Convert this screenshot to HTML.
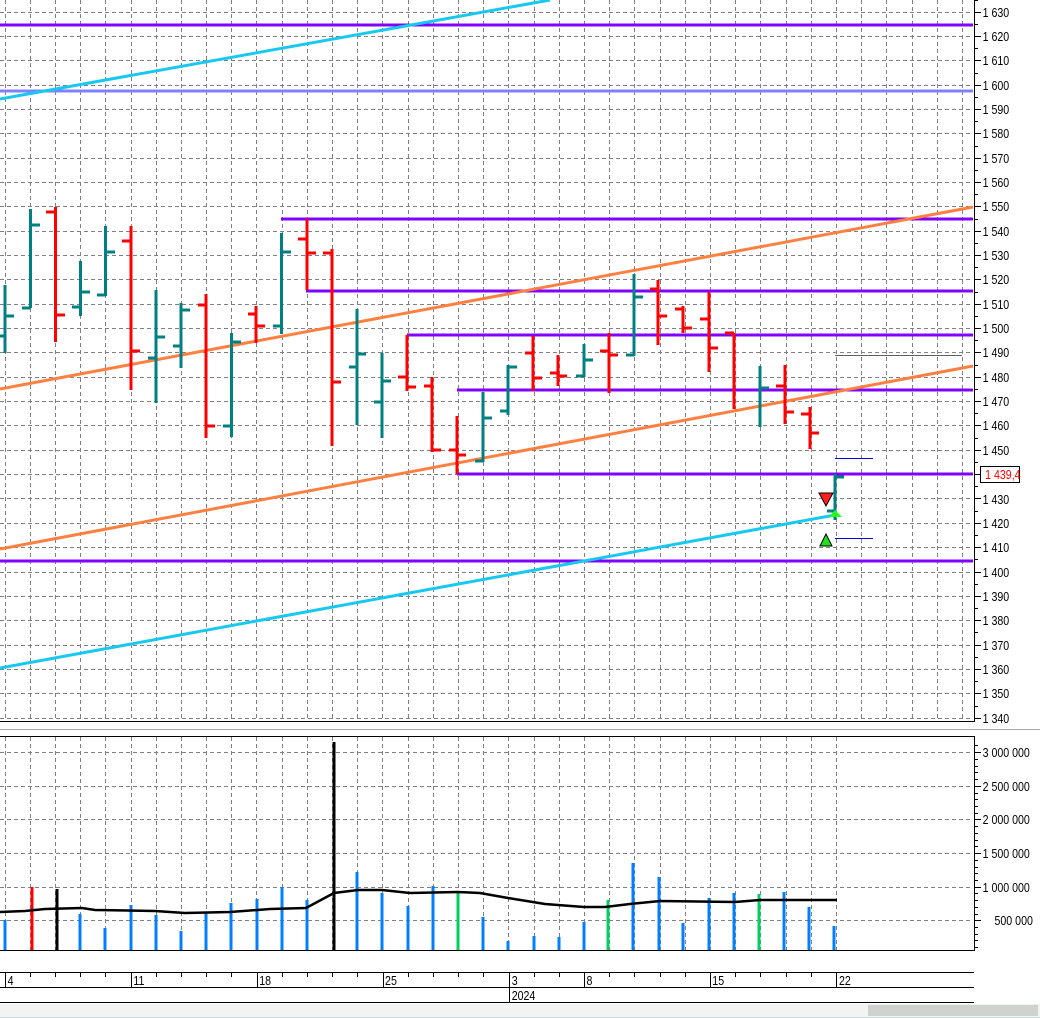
<!DOCTYPE html>
<html><head><meta charset="utf-8"><style>
html,body{margin:0;padding:0;background:#fff;width:1040px;height:1018px;overflow:hidden}
svg{display:block}
text{font-family:"Liberation Sans",sans-serif;font-size:12.5px;fill:#000}
</style></head><body>
<svg width="1040" height="1018" viewBox="0 0 1040 1018" xmlns="http://www.w3.org/2000/svg">
<rect width="1040" height="1018" fill="#fff"/>
<g stroke="#808080" stroke-width="1" stroke-dasharray="4,3" fill="none" shape-rendering="crispEdges">
<path d="M0 12.5H973M0 36.5H973M0 60.5H973M0 85.5H973M0 109.5H973M0 133.5H973M0 158.5H973M0 182.5H973M0 206.5H973M0 231.5H973M0 255.5H973M0 279.5H973M0 304.5H973M0 328.5H973M0 352.5H973M0 377.5H973M0 401.5H973M0 425.5H973M0 450.5H973M0 474.5H973M0 498.5H973M0 523.5H973M0 547.5H973M0 572.5H973M0 596.5H973M0 620.5H973M0 645.5H973M0 669.5H973M0 693.5H973M0 718.5H973"/>
<path d="M5.5 0V719M30.5 0V719M55.5 0V719M80.5 0V719M105.5 0V719M131.5 0V719M156.5 0V719M181.5 0V719M206.5 0V719M231.5 0V719M256.5 0V719M282.5 0V719M307.5 0V719M332.5 0V719M357.5 0V719M382.5 0V719M408.5 0V719M433.5 0V719M458.5 0V719M483.5 0V719M508.5 0V719M534.5 0V719M559.5 0V719M584.5 0V719M609.5 0V719M634.5 0V719M660.5 0V719M685.5 0V719M710.5 0V719M735.5 0V719M760.5 0V719M786.5 0V719M811.5 0V719M836.5 0V719M861.5 0V719M886.5 0V719M912.5 0V719M937.5 0V719M962.5 0V719"/>
<path d="M0 752.5H973M0 786.5H973M0 819.5H973M0 853.5H973M0 887.5H973M0 920.5H973"/>
<path d="M5.5 737V950M30.5 737V950M55.5 737V950M80.5 737V950M105.5 737V950M131.5 737V950M156.5 737V950M181.5 737V950M206.5 737V950M231.5 737V950M256.5 737V950M282.5 737V950M307.5 737V950M332.5 737V950M357.5 737V950M382.5 737V950M408.5 737V950M433.5 737V950M458.5 737V950M483.5 737V950M508.5 737V950M534.5 737V950M559.5 737V950M584.5 737V950M609.5 737V950M634.5 737V950M660.5 737V950M685.5 737V950M710.5 737V950M735.5 737V950M760.5 737V950M786.5 737V950M811.5 737V950M836.5 737V950"/>
</g>
<g stroke-width="3" fill="none">
<path d="M0 25H973" stroke="#8000ff"/>
<path d="M0 91H973" stroke="#8080ff"/>
<path d="M0 561H973" stroke="#8000ff"/>
<path d="M281 219H973M306 291H973M407 335H973M457 390H973M457 474H973" stroke="#8000ff"/>
</g>
<path d="M835 355.5H962" stroke="#606060" stroke-width="1"/>
<path d="M835 458.5H873M835 538.5H873" stroke="#0000e0" stroke-width="1"/>
<g stroke-width="3" fill="none">
<path d="M0 99L550 0" stroke="#18c8f0"/>
<path d="M0 668L835 515" stroke="#18c8f0"/>
<path d="M0 389L973 207" stroke="#ff8040"/>
<path d="M0 549L973 366" stroke="#ff8040"/>
</g>
<g stroke="#008080" stroke-width="3" fill="none">
<path d="M5 285V353M0 336H5M5 316H14"/>
<path d="M30.5 209V308M22 308H30.5M30.5 225H40"/>
<path d="M80.5 261V316M72 307H80.5M80.5 292H90"/>
<path d="M105.5 226V296M97 295H105.5M105.5 252H115"/>
<path d="M156 290V403M148 358H156M156 337H165"/>
<path d="M181 303V368M173 346H181M181 310H190"/>
<path d="M231.5 333V437M223 426H231.5M231.5 342H241"/>
<path d="M281.5 233V334M273 326H281.5M281.5 252H291"/>
<path d="M357 309V425M349 367H357M357 354H366"/>
<path d="M382 353V438M374 402H382M382 381H391"/>
<path d="M483 392V462M475 461H483M483 418H492"/>
<path d="M508 365V415M500 411H508M508 367H517"/>
<path d="M584 344V377M576 376H584M584 360H593"/>
<path d="M634 274V356M626 355H634M634 297H643"/>
<path d="M760 366V427M760 388H769"/>
<path d="M835 474V520M827 511H835M835 477H844"/>
</g>
<g stroke="#ff0000" stroke-width="3" fill="none">
<path d="M55.5 207V342M46 212H55.5M55.5 315H65"/>
<path d="M131 226V390M122 241H131M131 351H140"/>
<path d="M206 294V438M198 305H206M206 426H215"/>
<path d="M256 306V343M248 314H256M256 326H265"/>
<path d="M307 219V290M298 239H307M307 253H316"/>
<path d="M332 249V446M323 253H332M332 382H341"/>
<path d="M407 335V391M398 377H407M407 387H416"/>
<path d="M432 377V452M424 386H432M432 450H441"/>
<path d="M457 416V474M449 450H457M457 455H466"/>
<path d="M533 336V391M525 353H533M533 378H542"/>
<path d="M558 355V386M550 373H558M558 376H567"/>
<path d="M609 333V393M600 351H609M609 355H618"/>
<path d="M658 280V345M650 289H658M658 316H667"/>
<path d="M683 306V333M675 309H683M683 328H692"/>
<path d="M709 292V372M700 319H709M709 348H718"/>
<path d="M734 333V409M725 333H734"/>
<path d="M785 365V424M776 386H785M785 412H794"/>
<path d="M810 407V449M801 414H810M810 433H819"/>
</g>
<path d="M819 493H833L826 506Z" fill="#ff2020" stroke="#000" stroke-width="1"/>
<path d="M820 546H832L826 534Z" fill="#20e020" stroke="#000" stroke-width="1"/>
<path d="M829 517H842L835 510Z" fill="#20ff20"/>
<g stroke-width="3" fill="none">
<path stroke="#0080ff" d="M5 920V950M80 914V950M105 928V950M131 905V950M156 915V950M181 931V950M206 913V950M231 903V950M257 899V950M282 887V950M307 900V950M357 872V950M382 893V950M408 906V950M433 886V950M483 917V950M508 941V950M534 936V950M559 937V950M584 922V950M633 863V950M659 877V950M683 923V950M709 898V950M734 893V950M784 892V950M809 907V950M834 926V950"/>
<path stroke="#ff0000" d="M32 887V950"/>
<path stroke="#000" d="M57 889V950M334 742V950"/>
<path stroke="#00d060" d="M458 893V950M608 900V950M759 894V950"/>
</g>
<path d="M0 912L25 911L45 909L82 908L95 910L155 911L185 913L230 912L270 909L306 908L334 893L358 890L382 890L410 893L458 892L480 893L508 898L545 904L584 907L605 907L630 904L650 902L660 901L735 902L760 900L837 900" stroke="#000" stroke-width="2.5" fill="none"/>
<g stroke-width="1" fill="none" shape-rendering="crispEdges">
<path d="M0 721.5H974" stroke="#000"/>
<path d="M0 729.5H1040" stroke="#a8a8a8"/>
<path d="M0 736.5H974" stroke="#000"/>
<path d="M0 950.5H974" stroke="#000"/>
<path d="M974.5 0V722M974.5 736V951" stroke="#000"/>
<path d="M0 972.5H974M0 987.5H974M0 1002.5H974" stroke="#000"/>
<path d="M5.5 973V987M131.5 973V987M257.5 973V987M383.5 973V987M509.5 973V1002M584.5 973V987M710.5 973V987M836.5 973V987" stroke="#000"/>
<path d="M30.5 973V977M55.5 973V977M80.5 973V977M105.5 973V977M156.5 973V977M181.5 973V977M206.5 973V977M231.5 973V977M282.5 973V977M307.5 973V977M332.5 973V977M357.5 973V977M408.5 973V977M433.5 973V977M458.5 973V977M483.5 973V977M534.5 973V977M559.5 973V977M609.5 973V977M634.5 973V977M660.5 973V977M685.5 973V977M735.5 973V977M760.5 973V977M786.5 973V977M811.5 973V977" stroke="#000"/>
<path d="M974 12.5H981M974 36.5H981M974 60.5H981M974 85.5H981M974 109.5H981M974 133.5H981M974 158.5H981M974 182.5H981M974 206.5H981M974 231.5H981M974 255.5H981M974 279.5H981M974 304.5H981M974 328.5H981M974 352.5H981M974 377.5H981M974 401.5H981M974 425.5H981M974 450.5H981M974 474.5H981M974 498.5H981M974 523.5H981M974 547.5H981M974 572.5H981M974 596.5H981M974 620.5H981M974 645.5H981M974 669.5H981M974 693.5H981M974 718.5H981" stroke="#000"/>
<path d="M974 0.5H978M974 24.5H978M974 48.5H978M974 73.5H978M974 97.5H978M974 121.5H978M974 146.5H978M974 170.5H978M974 194.5H978M974 219.5H978M974 243.5H978M974 267.5H978M974 292.5H978M974 316.5H978M974 340.5H978M974 365.5H978M974 389.5H978M974 413.5H978M974 438.5H978M974 462.5H978M974 486.5H978M974 511.5H978M974 535.5H978M974 559.5H978M974 584.5H978M974 608.5H978M974 632.5H978M974 657.5H978M974 681.5H978M974 706.5H978" stroke="#000"/>
<path d="M974 752.5H981M974 786.5H981M974 819.5H981M974 853.5H981M974 887.5H981M974 920.5H981" stroke="#000"/>
<path d="M974 745.5H978M974 759.5H978M974 766.5H978M974 772.5H978M974 779.5H978M974 793.5H978M974 799.5H978M974 806.5H978M974 813.5H978M974 826.5H978M974 833.5H978M974 840.5H978M974 846.5H978M974 860.5H978M974 867.5H978M974 873.5H978M974 880.5H978M974 893.5H978M974 900.5H978M974 907.5H978M974 914.5H978M974 927.5H978M974 934.5H978M974 940.5H978M974 947.5H978" stroke="#000"/>
</g>
<rect x="980.5" y="466.5" width="39" height="16" fill="#fff" stroke="#000"/>
<g transform="scale(0.85 1)">
<text x="1156" y="17">1 630</text><text x="1156" y="41">1 620</text><text x="1156" y="65">1 610</text><text x="1156" y="90">1 600</text><text x="1156" y="114">1 590</text><text x="1156" y="138">1 580</text><text x="1156" y="163">1 570</text><text x="1156" y="187">1 560</text><text x="1156" y="211">1 550</text><text x="1156" y="236">1 540</text><text x="1156" y="260">1 530</text><text x="1156" y="284">1 520</text><text x="1156" y="309">1 510</text><text x="1156" y="333">1 500</text><text x="1156" y="357">1 490</text><text x="1156" y="382">1 480</text><text x="1156" y="406">1 470</text><text x="1156" y="430">1 460</text><text x="1156" y="455">1 450</text><text x="1156" y="504">1 430</text><text x="1156" y="528">1 420</text><text x="1156" y="552">1 410</text><text x="1156" y="577">1 400</text><text x="1156" y="601">1 390</text><text x="1156" y="625">1 380</text><text x="1156" y="650">1 370</text><text x="1156" y="674">1 360</text><text x="1156" y="698">1 350</text><text x="1156" y="723">1 340</text>
<text x="1159" y="479" style="fill:#ff0000">1 439,4</text>
<text x="1156" y="757">3 000 000</text><text x="1156" y="791">2 500 000</text><text x="1156" y="824">2 000 000</text><text x="1156" y="858">1 500 000</text><text x="1156" y="892">1 000 000</text><text x="1170" y="925">500 000</text>
<text x="9" y="985">4</text><text x="157" y="985">11</text><text x="305" y="985">18</text><text x="453" y="985">25</text><text x="602" y="985">3</text><text x="690" y="985">8</text><text x="838" y="985">15</text><text x="987" y="985">22</text>
<text x="-6" y="1000">c</text><text x="602" y="1000">2024</text>
</g>
<rect x="0" y="1004" width="1040" height="13" fill="#f3f3f3"/>
<rect x="868" y="1005" width="170" height="11" fill="#d0d2d0"/>
<path d="M0 1017.5H1040" stroke="#c8d8e8" stroke-width="1"/>
</svg>
</body></html>
